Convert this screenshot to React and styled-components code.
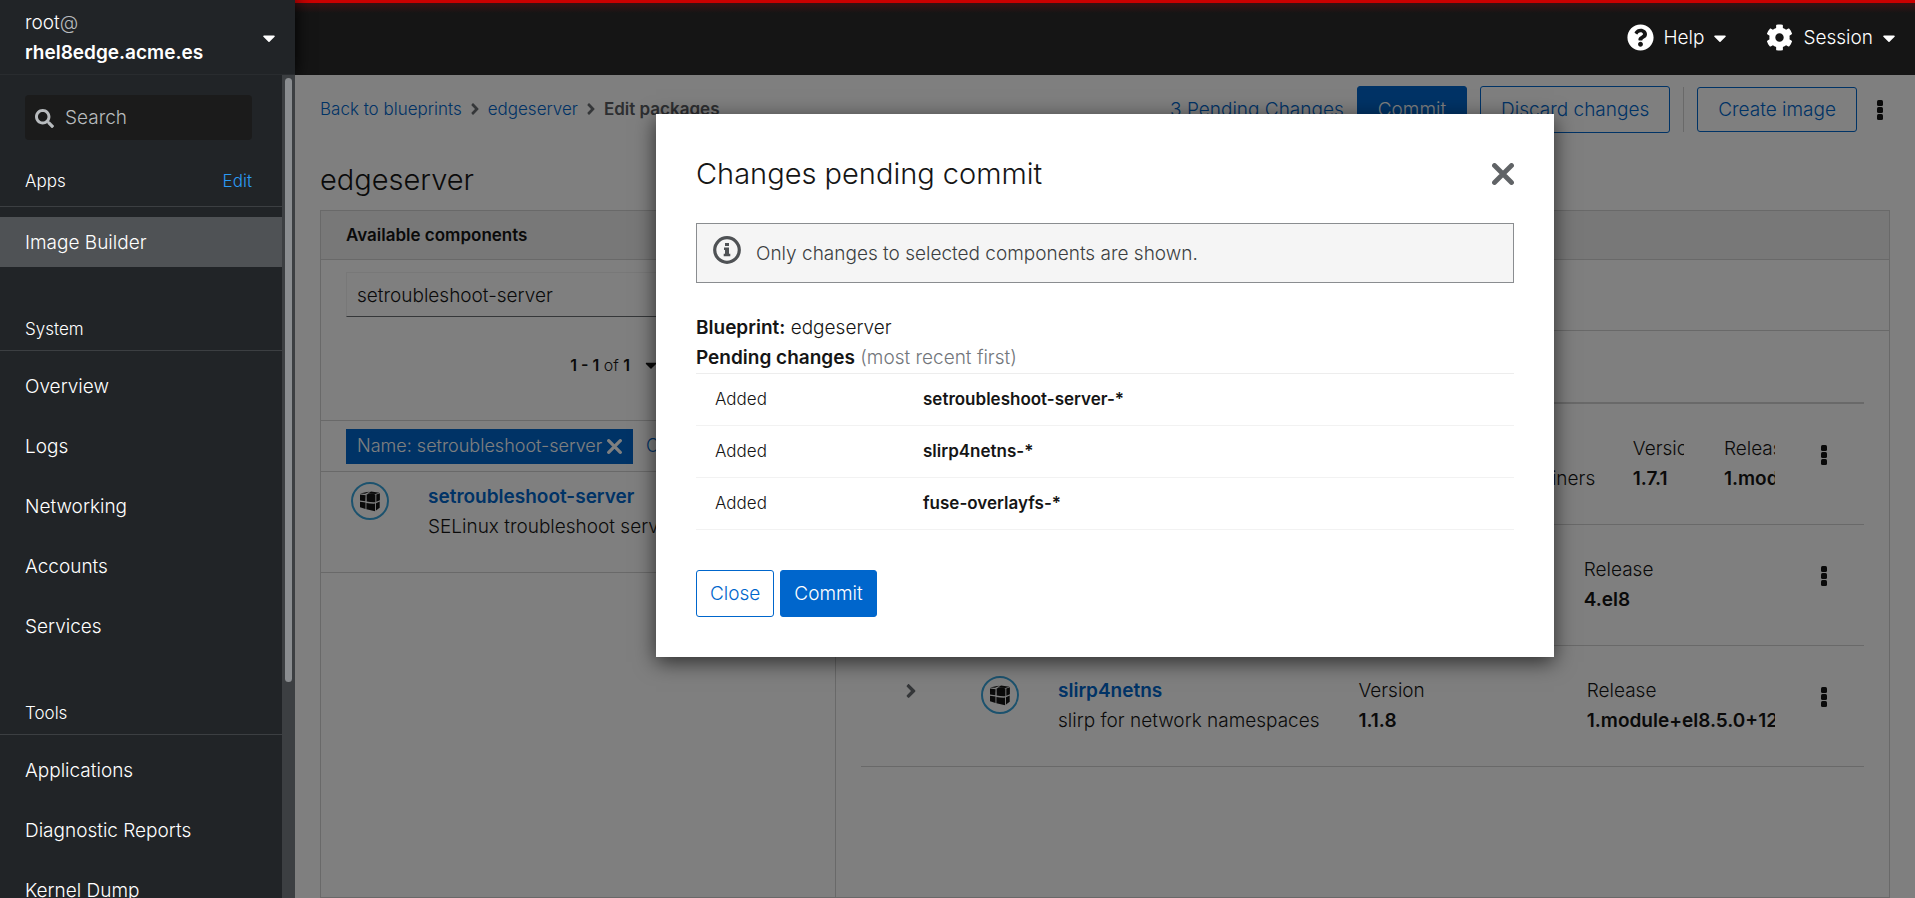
import React from "react";
import styled, { createGlobalStyle, css } from "styled-components";
import {
  FaAngleLeft,
  FaAngleRight,
  FaCaretDown,
  FaCog,
  FaQuestionCircle,
  FaSearch,
} from "react-icons/fa";

const GlobalStyle = createGlobalStyle`
  *, *::before, *::after { box-sizing: border-box; }
  body { margin: 0; }
  body, button, input {
    font-family: Inter, "Liberation Sans", sans-serif;
    font-size: 19px;
    font-weight: 350;
    line-height: 30px;
    color: #151515;
  }
  button { margin: 0; padding: 0; border: 0; background: none; cursor: pointer; }
  a { color: #06c; text-decoration: none; }
  h1, h2, h3, p, ul, ol, dl, dd { margin: 0; padding: 0; font-weight: 350; }
  ul, ol { list-style: none; }
  svg { display: block; flex: none; }
`;

const Shell = styled.div`
  display: grid;
  grid-template: 75px minmax(0, 1fr) / 295px minmax(0, 1fr);
  height: 100vh;
  overflow: hidden;
`;

/* ---------- host switcher and masthead ---------- */

const HostButton = styled.button`
  position: relative;
  z-index: 1;
  display: flex;
  align-items: center;
  justify-content: space-between;
  padding: 1px 16px 0 25px;
  background: #212427;
  border-bottom: 1px solid #292c2f;
  box-shadow: 0 0 16px #000;
  color: #fff;
  text-align: left;
`;

const HostName = styled.span`
  display: flex;
  flex-direction: column;

  span span { color: #b8bbbe; }
  strong { font-weight: 600; }
`;

const Masthead = styled.header`
  display: flex;
  align-items: center;
  justify-content: flex-end;
  gap: 36px;
  padding: 0 16px 3px 0;
  border-top: 3px solid #c00;
  background: linear-gradient(#3a1112, #151515 10px);
`;

const MenuButton = styled.button`
  display: flex;
  align-items: center;
  gap: 6px;
  color: #fff;

  svg:first-child { margin-right: 4px; }
`;

/* ---------- navigation ---------- */

const Sidebar = styled.div`
  position: relative;
  z-index: 2;
  display: grid;
  grid-template-columns: minmax(0, 1fr) 13px;
  min-height: 0;
  background: #212427;
`;

const Nav = styled.nav`
  min-height: 0;
  overflow-y: auto;
  scrollbar-width: none;
`;

const ScrollTrack = styled.div`
  display: grid;
  grid-template-rows: 604fr 216fr;
  padding: 3px 3px 0;
  background: #3c3f42;
`;

const ScrollThumb = styled.div`
  border-radius: 4px;
  background: #8a8d90;
`;

const SearchBox = styled.label`
  display: flex;
  align-items: center;
  gap: 11px;
  height: 45px;
  margin: 20px 30px 0 25px;
  padding: 1px 10px 0;
  border-radius: 4px;
  background: #1b1b1b;
  color: #b8bbbe;

  input {
    min-width: 0;
    flex: 1;
    padding: 0;
    border: 0;
    outline: 0;
    background: none;
    color: inherit;
  }
  input::placeholder { color: #b8bbbe; opacity: 1; }
`;

const NavHeading = styled.div`
  display: flex;
  align-items: center;
  justify-content: space-between;
  padding: ${(p) => (p.$first ? "26px 30px 10px 25px" : "47px 30px 6px 25px")};
  border-bottom: 1px solid #3c3f42;
  color: #fff;

  h2, a { font-size: 17px; }
  a { color: #2b9af3; }
`;

const NavList = styled.ul`
  display: flex;
  flex-direction: column;
  gap: 10px;
  padding-top: 10px;
`;

const NavLink = styled.a`
  display: block;
  padding: 11px 25px 9px;
  color: #fff;
  background: ${(p) => (p.$current ? "#4f5255" : "none")};
`;

/* ---------- page ---------- */

const Main = styled.main`
  position: relative;
  z-index: 2;
  display: flex;
  flex-direction: column;
  min-width: 0;
  min-height: 0;
  padding: 11px 25px 0;
  background: #fff;
`;

const PageHeader = styled.div`
  display: flex;
  align-items: center;
  justify-content: space-between;
  height: 47px;
`;

const Breadcrumb = styled.ol`
  display: flex;
  align-items: center;
  padding-bottom: 2px;
  font-size: 17px;

  li { display: flex; align-items: center; }
  svg { margin: 0 4px; color: #6a6e73; }
  strong { color: #5a5d62; font-weight: 600; }
`;

const Actions = styled.div`
  display: flex;
  align-items: center;
  gap: 13px;
`;

const Button = styled.button`
  height: ${(p) => (p.$small ? 45 : 47)}px;
  padding: 0 ${(p) => (p.$tight ? 13 : 20)}px;
  border: 1px solid #06c;
  border-radius: 3px;
  color: #06c;
  ${(p) =>
    p.$primary &&
    css`
      background: #06c;
      color: #fff;
    `}
`;

const Divider = styled.span`
  width: 1px;
  height: 45px;
  background: #d2d2d2;
`;

const KebabButton = styled.button`
  display: flex;
  justify-content: center;
  width: 20px;
`;

const PageTitle = styled.h1`
  margin-top: 27px;
  font-size: 29px;
  font-weight: 300;
  line-height: 39px;
`;

const Workspace = styled.div`
  display: grid;
  grid-template-columns: minmax(0, 514fr) minmax(0, 1054fr);
  flex: 1;
  min-height: 0;
  margin-top: 11px;
  border: 1px solid #d2d2d2;
`;

const Pane = styled.section`
  min-width: 0;

  & + & { border-left: 1px solid #d2d2d2; }
`;

const PaneHeading = styled.h2`
  height: 49px;
  padding: 9px 25px;
  border-bottom: 1px solid #d2d2d2;
  background: #f0f0f0;
  font-size: 17px;
  font-weight: 600;
`;

const FilterArea = styled.div`
  padding: 12px 25px 0;
  height: 161px;
  border-bottom: 1px solid #d2d2d2;
`;

const FilterInput = styled.input`
  display: block;
  width: 100%;
  height: 45px;
  padding: 1px 10px 0;
  border: 1px solid #f0f0f0;
  border-bottom-color: #6a6e73;
  border-radius: 0;
  background: #fff;
`;

const Pagination = styled.div`
  display: flex;
  align-items: center;
  justify-content: flex-end;
  gap: 12px;
  margin-top: 33px;
  font-size: 16px;

  b { font-weight: 600; }
`;

const PageButtons = styled.div`
  display: flex;

  button {
    display: flex;
    justify-content: center;
    width: 69px;
  }
`;

const ChipRow = styled.div`
  display: flex;
  align-items: center;
  gap: 13px;
  height: 51px;
  padding: 0 25px;
  border-bottom: 1px solid #d2d2d2;
  font-size: 18px;
`;

const Chip = styled.span`
  display: flex;
  align-items: center;
  justify-content: space-between;
  width: 287px;
  height: 35px;
  padding: 0 11px;
  background: #06c;
  color: #fff;
  white-space: nowrap;

  button { color: inherit; }
`;

const Available = styled.div`
  display: flex;
  gap: 39px;
  padding: 10px 30px 30px;
  border-bottom: 1px solid #d2d2d2;
`;

const ComponentText = styled.div`
  min-width: 0;
  white-space: nowrap;

  a { font-weight: 600; }
`;

const ToolbarSpace = styled.div`
  height: 71px;
  border-bottom: 1px solid #d2d2d2;
`;

const ComponentList = styled.ul`
  margin: 71px 25px 0;
  border-top: 2px solid #d2d2d2;
`;

const ComponentRow = styled.li`
  display: grid;
  grid-template-columns: 41px 38px minmax(0, 1fr) 20px;
  column-gap: 39px;
  padding: 30px 30px 30px 40px;
  border-bottom: 1px solid #d2d2d2;
`;

const RowToggle = styled.button`
  display: flex;
  align-items: center;
  justify-content: center;
  width: 20px;
  height: 30px;
  color: #6a6e73;
`;

const RowKebab = styled(KebabButton)`
  align-self: start;
  padding-top: 11px;
`;

const RowDetails = styled.dl`
  display: grid;
  grid-template-columns: ${(p) => p.$columns};
  column-gap: 40px;
  min-width: 0;
`;

const Fact = styled.div`
  min-width: 0;
  overflow: hidden;
  white-space: nowrap;

  dd { font-weight: 600; }
`;

/* ---------- dialog ---------- */

const Backdrop = styled.div`
  position: absolute;
  inset: 0;
  display: flex;
  align-items: flex-start;
  justify-content: center;
  padding-top: 39px;
  background: rgba(0, 0, 0, 0.5);
`;

const Dialog = styled.div`
  width: 898px;
  max-width: 100%;
  padding: 40px;
  background: #fff;
  box-shadow: 0 5px 20px rgba(0, 0, 0, 0.65);
`;

const DialogHeader = styled.div`
  display: flex;
  align-items: center;
  justify-content: space-between;

  h2 {
    font-size: 29px;
    font-weight: 300;
    line-height: 39px;
  }
  button { color: #606366; }
`;

const Notice = styled.div`
  display: flex;
  gap: 15px;
  height: 60px;
  margin: 30px 0;
  padding: 12px 16px;
  border: 1px solid #8a8d90;
  background: #f5f5f5;
  color: #3c3f42;

  p { padding-top: 3px; }
`;

const Summary = styled.p`
  b { font-weight: 600; }
  span { color: #72767b; }
`;

const ChangesTable = styled.table`
  width: 100%;
  border-collapse: collapse;
  border-top: 1px solid #ededed;
  table-layout: fixed;

  tr { border-bottom: 1px solid #f2f2f2; }
  td, th {
    height: 52px;
    padding: 0 19px 2px;
    font-size: 17px;
    text-align: left;
  }
  td:first-child { width: 208px; }
  th { font-weight: 600; }
`;

const DialogActions = styled.div`
  display: flex;
  gap: 6px;
  margin-top: 40px;
`;

/* ---------- icons ---------- */

const Cross = ({ size }) => (
  <svg width={size} height={size} viewBox="0 0 22 22" aria-hidden="true">
    <path
      d="M2.500 2.500l17 17M19.500 2.500l-17 17"
      stroke="currentColor"
      strokeWidth="4.800"
      strokeLinecap="round"
    />
  </svg>
);

const Kebab = () => (
  <svg width="6" height="20" viewBox="0 0 6 20" fill="#151515" aria-hidden="true">
    <rect width="6" height="6" rx="1.5" />
    <rect y="7" width="6" height="6" rx="1.5" />
    <rect y="14" width="6" height="6" rx="1.5" />
  </svg>
);

const PackageIcon = () => (
  <svg width="38" height="38" viewBox="0 0 38 38" aria-hidden="true">
    <circle cx="19" cy="19" r="18" fill="none" stroke="#39a5dc" strokeWidth="2" />
    <g fill="#151515">
      <path d="M9 11.500l7-1.600 2.600-.2-4.600 2z" />
      <path d="M20 9.600l8.500 1.200-4.200 1.300-7.600-.6z" />
      <path d="M9 12.400l5.600.8-.3 6-5.300-.7z" />
      <path d="M15.600 12.600q4.400-2 8.800-.2v7.900q-4.400.3-8.700-.7z" />
      <path d="M25.300 12.500l3.600-1.200v7l-3.600 1.500z" />
      <path d="M9 19.700l5.500.9v6.500L9 25.300z" />
      <path d="M15.400 20.900q4.400.9 8.700.7v7.600l-8.700-1.900z" />
      <path d="M25 21.300l3.700-1.700v6.100L25 28.400z" />
    </g>
  </svg>
);

const InfoIcon = () => (
  <svg width="28" height="28" viewBox="0 0 28 28" aria-hidden="true">
    <circle cx="14" cy="14" r="12.300" fill="none" stroke="#4f5255" strokeWidth="3.200" />
    <path
      fill="#4f5255"
      d="M12 7h4v3h-4zM11 11.500h5v6.300h1.300v2.400h-6.600v-2.400H12v-3.900h-1z"
    />
  </svg>
);

/* ---------- data ---------- */

const navSections = [
  { title: "System", items: ["Overview", "Logs", "Networking", "Accounts", "Services"] },
  { title: "Tools", items: ["Applications", "Diagnostic Reports", "Kernel Dump"] },
];

const selected = [
  {
    name: "fuse-overlayfs",
    summary: "FUSE overlay + shiftfs implementation for rootless containers",
    version: "1.7.1",
    release: "1.module+el8.5.0+12582",
    columns: "minmax(0, 534fr) minmax(0, 51fr) minmax(0, 51fr)",
  },
  {
    name: "setroubleshoot-server",
    summary: "SELinux troubleshoot server",
    version: "3.3.24",
    release: "4.el8",
    columns: "minmax(0, 254fr) minmax(0, 191fr) minmax(0, 191fr)",
  },
  {
    name: "slirp4netns",
    summary: "slirp for network namespaces",
    version: "1.1.8",
    release: "1.module+el8.5.0+12582",
    columns: "minmax(0, 260fr) minmax(0, 188fr) minmax(0, 188fr)",
  },
];

const changes = ["setroubleshoot-server-*", "slirp4netns-*", "fuse-overlayfs-*"];

export default function App() {
  return (
    <>
      <GlobalStyle />
      <Shell>
        <HostButton type="button">
          <HostName>
            <span>
              root<span>@</span>
            </span>
            <strong>rhel8edge.acme.es</strong>
          </HostName>
          <FaCaretDown size={20} />
        </HostButton>

        <Masthead>
          <MenuButton type="button">
            <FaQuestionCircle size={27} />
            Help
            <FaCaretDown size={20} />
          </MenuButton>
          <MenuButton type="button">
            <FaCog size={27} />
            Session
            <FaCaretDown size={20} />
          </MenuButton>
        </Masthead>

        <Sidebar>
          <Nav aria-label="Main">
            <SearchBox>
              <FaSearch size={19} />
              <input type="search" placeholder="Search" aria-label="Search" />
            </SearchBox>
            <NavHeading $first>
              <h2>Apps</h2>
              <a href="#edit">Edit</a>
            </NavHeading>
            <NavList>
              <li>
                <NavLink href="#image-builder" $current aria-current="page">
                  Image Builder
                </NavLink>
              </li>
            </NavList>
            {navSections.map((section) => (
              <React.Fragment key={section.title}>
                <NavHeading>
                  <h2>{section.title}</h2>
                </NavHeading>
                <NavList>
                  {section.items.map((item) => (
                    <li key={item}>
                      <NavLink href="#nav">{item}</NavLink>
                    </li>
                  ))}
                </NavList>
              </React.Fragment>
            ))}
          </Nav>
          <ScrollTrack>
            <ScrollThumb />
          </ScrollTrack>
        </Sidebar>

        <Main>
          <PageHeader>
            <Breadcrumb>
              <li>
                <a href="#blueprints">Back to blueprints</a>
                <FaAngleRight size={18} />
              </li>
              <li>
                <a href="#edgeserver">edgeserver</a>
                <FaAngleRight size={18} />
              </li>
              <li>
                <strong>Edit packages</strong>
              </li>
            </Breadcrumb>
            <Actions>
              <a href="#pending">3 Pending Changes</a>
              <Button type="button" $primary>
                Commit
              </Button>
              <Button type="button">Discard changes</Button>
              <Divider />
              <Button type="button" $small>
                Create image
              </Button>
              <KebabButton type="button" aria-label="More actions">
                <Kebab />
              </KebabButton>
            </Actions>
          </PageHeader>
          <PageTitle>edgeserver</PageTitle>

          <Workspace>
            <Pane>
              <PaneHeading>Available components</PaneHeading>
              <FilterArea>
                <FilterInput
                  type="text"
                  defaultValue="setroubleshoot-server"
                  aria-label="Filter components"
                />
                <Pagination>
                  <span>
                    <b>1 - 1</b> of <b>1</b>
                  </span>
                  <FaCaretDown size={18} />
                  <PageButtons>
                    <button type="button" aria-label="Previous page">
                      <FaAngleLeft />
                    </button>
                    <button type="button" aria-label="Next page">
                      <FaAngleRight />
                    </button>
                  </PageButtons>
                </Pagination>
              </FilterArea>
              <ChipRow>
                <Chip>
                  Name: setroubleshoot-server
                  <button type="button" aria-label="Remove filter">
                    <Cross size={15} />
                  </button>
                </Chip>
                <a href="#clear">Clear all filters</a>
              </ChipRow>
              <Available>
                <PackageIcon />
                <ComponentText>
                  <a href="#setroubleshoot-server">setroubleshoot-server</a>
                  <p>SELinux troubleshoot server</p>
                </ComponentText>
              </Available>
            </Pane>

            <Pane>
              <PaneHeading />
              <ToolbarSpace />
              <ComponentList>
                {selected.map((item) => (
                  <ComponentRow key={item.name}>
                    <RowToggle type="button" aria-label="Show details">
                      <FaAngleRight size={22} />
                    </RowToggle>
                    <PackageIcon />
                    <RowDetails $columns={item.columns}>
                      <ComponentText>
                        <a href="#component">{item.name}</a>
                        <p>{item.summary}</p>
                      </ComponentText>
                      <Fact>
                        <dt>Version</dt>
                        <dd>{item.version}</dd>
                      </Fact>
                      <Fact>
                        <dt>Release</dt>
                        <dd>{item.release}</dd>
                      </Fact>
                    </RowDetails>
                    <RowKebab type="button" aria-label="Component actions">
                      <Kebab />
                    </RowKebab>
                  </ComponentRow>
                ))}
              </ComponentList>
            </Pane>
          </Workspace>

          <Backdrop>
            <Dialog role="dialog" aria-modal="true" aria-labelledby="dialog-title">
              <DialogHeader>
                <h2 id="dialog-title">Changes pending commit</h2>
                <button type="button" aria-label="Close dialog">
                  <Cross size={22} />
                </button>
              </DialogHeader>
              <Notice>
                <InfoIcon />
                <p>Only changes to selected components are shown.</p>
              </Notice>
              <Summary>
                <b>Blueprint:</b> edgeserver
              </Summary>
              <Summary>
                <b>Pending changes</b> <span>(most recent first)</span>
              </Summary>
              <ChangesTable>
                <tbody>
                  {changes.map((name) => (
                    <tr key={name}>
                      <td>Added</td>
                      <th scope="row">{name}</th>
                    </tr>
                  ))}
                </tbody>
              </ChangesTable>
              <DialogActions>
                <Button type="button" $tight>
                  Close
                </Button>
                <Button type="button" $tight $primary>
                  Commit
                </Button>
              </DialogActions>
            </Dialog>
          </Backdrop>
        </Main>
      </Shell>
    </>
  );
}
